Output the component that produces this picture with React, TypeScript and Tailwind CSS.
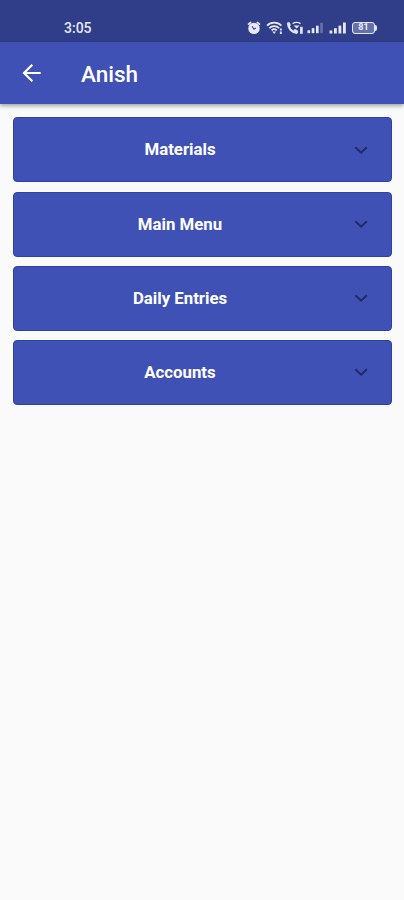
import React, { useState } from 'react';

const sections = ['Materials', 'Main Menu', 'Daily Entries', 'Accounts'];

const SignalBars: React.FC<{ className?: string; weak?: boolean }> = ({ className, weak }) => (
  <svg className={className} viewBox="0 0 18 13" fill="currentColor">
    <rect x="0.5" y="9.5" width="2.8" height="3" />
    <rect x="5" y="7.2" width="2.8" height="5.3" />
    <rect x="9.5" y="4.6" width="2.8" height="7.9" />
    <rect x="14" y="1.5" width="2.8" height="11" opacity={weak ? 0.3 : 1} />
  </svg>
);

const StatusBar: React.FC = () => (
  <div className="flex h-[42px] items-center bg-[#303d88] pl-[64px] pr-[27px] pt-[13px] text-[#e6e8f5]">
    <span className="text-[14px] font-medium leading-none">3:05</span>
    <div className="ml-auto flex items-center">
      {/* Alarm */}
      <svg className="h-[14px] w-[14px]" viewBox="0 0 14 14">
        <path d="M1.6 3.2 3.6 1.5M12.4 3.2 10.4 1.5" stroke="currentColor" strokeWidth="1.7" strokeLinecap="round" />
        <circle cx="7" cy="7.4" r="5.7" fill="currentColor" />
        <path d="M5 5.2 7 8.2 8.8 7" fill="none" stroke="#303d88" strokeWidth="1.1" />
      </svg>
      {/* Wifi */}
      <svg className="ml-[5px] h-[14px] w-[18px]" viewBox="0 0 18 14" fill="none" stroke="currentColor" strokeWidth="1.7">
        <path d="M1 4.7C5 .7 11.4.7 15.4 4.7M3.3 7.1c2.8-2.7 7-2.7 9.8 0M5.6 9.4c1.5-1.4 3.7-1.4 5.2 0" />
        <path d="M6.3 10.6h3.8l-1.9 2.4z" fill="currentColor" stroke="none" />
        <path d="M14.8 7.4v2.2M14.8 10.6v2.4" strokeWidth="1.9" />
      </svg>
      {/* Wifi calling */}
      <svg className="ml-[2px] h-[14px] w-[19px]" viewBox="0 0 19 14" fill="none" stroke="currentColor">
        <path d="M2.2 2.2C1.8 7 6 11.7 11 11.9" strokeWidth="2.2" />
        <path d="M1.2 2 3.4 1.6 4.4 4.4 2.8 5.6zM7.7 9.5 9 8.4l2.7 1.4-.2 2.3z" fill="currentColor" strokeWidth=".8" />
        <path d="M6.6 2.6c2.5-1.6 5.5-1.6 8 0" strokeWidth="1.3" />
        <path d="M7.6 4.4h6l-3 3.2z" fill="currentColor" stroke="none" />
        <path d="M15.4 5.8v7" strokeWidth="2.6" />
      </svg>
      <SignalBars weak className="ml-[2px] h-[13px] w-[17px]" />
      <SignalBars className="ml-[5px] h-[13px] w-[18px]" />
      <div className="ml-[5px] flex items-center">
        <div className="flex h-[12px] w-[23px] items-center justify-center rounded-[3px] border border-current bg-[#6670ab] text-[9px] font-bold leading-none">
          81
        </div>
        <div className="h-[6px] w-[2px] rounded-r-sm bg-current" />
      </div>
    </div>
  </div>
);

const SectionCard: React.FC<{ title: string; open: boolean; onToggle: () => void }> = ({ title, open, onToggle }) => (
  <button
    onClick={onToggle}
    aria-expanded={open}
    className="flex h-[65px] w-full items-center rounded-[4px] border border-[#2c41a8] bg-[#3f51b5] pl-[15px] pr-[22px] text-white"
  >
    <span className="flex-1 pr-[22px] text-center text-[16.8px] font-bold leading-none">{title}</span>
    <svg className={`h-[16px] w-[16px] ${open ? 'rotate-180' : ''}`} viewBox="0 0 16 16" fill="none" stroke="#202a64" strokeWidth="2">
      <path d="M2.4 5.2 8.1 10.7 13.8 5.2" />
    </svg>
  </button>
);

const App: React.FC = () => {
  const [openSection, setOpenSection] = useState<string | null>(null);

  return (
    <div className="flex min-h-screen flex-col bg-[#fafafa] font-[Roboto,sans-serif]">
      <StatusBar />
      <header className="flex h-[62px] items-center bg-[#3f51b5] pl-[20px] text-white shadow-[0_2px_4px_rgba(0,0,0,0.35)]">
        <button aria-label="Back">
          <svg className="h-[24px] w-[24px]" viewBox="0 0 24 24" fill="none" stroke="currentColor" strokeWidth="2.2">
            <path d="M20.7 12H4.5M12.3 3.7 4 12l8.3 8.3" />
          </svg>
        </button>
        <h1 className="ml-[37px] pt-[2px] text-[22.5px] font-medium leading-none">Anish</h1>
      </header>
      <main className="flex flex-col gap-[9.2px] pl-[13px] pr-[12px] pt-[13.4px]">
        {sections.map((title) => (
          <SectionCard
            key={title}
            title={title}
            open={openSection === title}
            onToggle={() => setOpenSection(openSection === title ? null : title)}
          />
        ))}
      </main>
    </div>
  );
};

export default App;
